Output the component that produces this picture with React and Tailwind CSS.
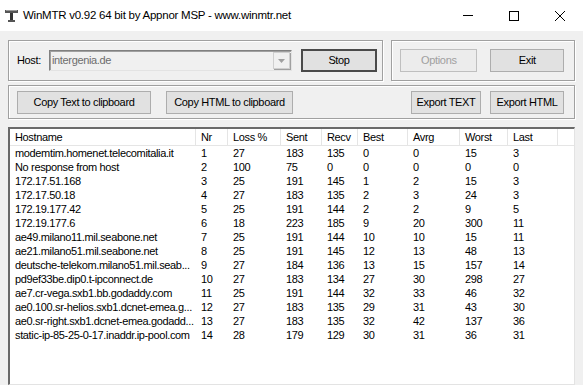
import React from 'react';

const rows = [
  ['modemtim.homenet.telecomitalia.it', 1, 27, 183, 135, 0, 0, 15, 3],
  ['No response from host', 2, 100, 75, 0, 0, 0, 0, 0],
  ['172.17.51.168', 3, 25, 191, 145, 1, 2, 15, 3],
  ['172.17.50.18', 4, 27, 183, 135, 2, 3, 24, 3],
  ['172.19.177.42', 5, 25, 191, 144, 2, 2, 9, 5],
  ['172.19.177.6', 6, 18, 223, 185, 9, 20, 300, 11],
  ['ae49.milano11.mil.seabone.net', 7, 25, 191, 144, 10, 10, 15, 11],
  ['ae21.milano51.mil.seabone.net', 8, 25, 191, 145, 12, 13, 48, 13],
  ['deutsche-telekom.milano51.mil.seab...', 9, 27, 184, 136, 13, 15, 157, 14],
  ['pd9ef33be.dip0.t-ipconnect.de', 10, 27, 183, 134, 27, 30, 298, 27],
  ['ae7.cr-vega.sxb1.bb.godaddy.com', 11, 25, 191, 144, 32, 33, 46, 32],
  ['ae0.100.sr-helios.sxb1.dcnet-emea.g...', 12, 27, 183, 135, 29, 31, 43, 30],
  ['ae0.sr-right.sxb1.dcnet-emea.godadd...', 13, 27, 183, 135, 32, 42, 137, 36],
  ['static-ip-85-25-0-17.inaddr.ip-pool.com', 14, 28, 179, 129, 30, 31, 36, 31],
];

const cols = [
  { label: 'Hostname', w: 'w-[186px]' },
  { label: 'Nr', w: 'w-[32px]' },
  { label: 'Loss %', w: 'w-[53px]' },
  { label: 'Sent', w: 'w-[41px]' },
  { label: 'Recv', w: 'w-[36px]' },
  { label: 'Best', w: 'w-[50px]' },
  { label: 'Avrg', w: 'w-[52px]' },
  { label: 'Worst', w: 'w-[48px]' },
  { label: 'Last', w: 'w-[50px]' },
];

function Btn({ children, className = '', disabled, primary }) {
  return (
    <div
      className={`flex items-center justify-center h-[23px] ${
        primary
          ? 'border-2 border-[#4a4a4a] bg-[#e1e1e1]'
          : disabled
          ? 'border border-[#bfbfbf] bg-[#ececec] text-[#a0a0a0]'
          : 'border border-[#adadad] bg-[#e1e1e1]'
      } ${className}`}
    >
      {children}
    </div>
  );
}

function Group({ children, className = '' }) {
  return (
    <div className={`border border-[#a0a0a0] shadow-[inset_1px_1px_0_#fff,1px_1px_0_#fff] flex items-center ${className}`}>
      {children}
    </div>
  );
}

export default function App() {
  return (
    <div className="w-[583px] h-[385px] bg-[#f0f0f0] overflow-hidden font-['Liberation_Sans',Arial,sans-serif] text-[11px] tracking-[-0.35px] text-black">
      {/* title bar */}
      <div className="h-[31px] bg-white flex items-center">
        <svg className="ml-[5px]" width="13" height="13" viewBox="0 0 13 13">
          <rect x="0" y="1" width="13" height="3" fill="#555" />
          <rect x="1" y="1" width="11" height="1" fill="#999" />
          <rect x="5" y="4" width="3" height="8" fill="#333" />
          <rect x="3" y="11" width="7" height="2" fill="#555" />
        </svg>
        <span className="ml-[5px] text-[11.5px] tracking-[-0.25px]">
          WinMTR v0.92 64 bit by Appnor MSP - www.winmtr.net
        </span>
        <div className="ml-auto flex items-center h-full">
          <div className="w-[46px] h-full flex items-center justify-center">
            <div className="w-[10px] h-px bg-black" />
          </div>
          <div className="w-[46px] h-full flex items-center justify-center">
            <div className="w-[10px] h-[10px] border border-black" />
          </div>
          <div className="w-[46px] h-full flex items-center justify-center">
            <svg width="10" height="10" viewBox="0 0 10 10">
              <path d="M0 0L10 10M10 0L0 10" stroke="#000" strokeWidth="1" />
            </svg>
          </div>
        </div>
      </div>

      <div className="px-[8px] pt-[9px]">
        {/* row 1 */}
        <div className="flex gap-[8px] h-[41px]">
          <Group className="w-[376px]">
            <span className="ml-[8px] w-[32px]">Host:</span>
            <div className="w-[243px] h-[21px] flex items-center bg-[#f0f0f0] border-t border-l border-[#808080] border-r border-b border-r-[#e3e3e3] border-b-[#e3e3e3] shadow-[inset_1px_1px_0_#a0a0a0]">
              <span className="ml-[2px] text-[#6d6d6d]">intergenia.de</span>
              <div className="ml-auto mr-[1px] w-[17px] h-[17px] bg-[#f0f0f0] border border-[#cfcfcf] shadow-[1px_1px_0_#a0a0a0] flex items-center justify-center">
                <svg width="7" height="4" viewBox="0 0 7 4">
                  <path d="M0 0H7L3.5 4Z" fill="#a0a0a0" />
                </svg>
              </div>
            </div>
            <Btn primary className="ml-[9px] w-[76px]">Stop</Btn>
          </Group>
          <Group className="w-[184px]">
            <Btn disabled className="ml-[8px] w-[77px]">Options</Btn>
            <Btn className="ml-[13px] w-[74px]">Exit</Btn>
          </Group>
        </div>

        {/* row 2 */}
        <Group className="mt-[4px] h-[34px]">
          <Btn className="ml-[8px] w-[134px]">Copy Text to clipboard</Btn>
          <Btn className="ml-[15px] w-[127px]">Copy HTML to clipboard</Btn>
          <Btn className="ml-auto w-[70px]">Export TEXT</Btn>
          <Btn className="ml-[9px] mr-[10px] w-[74px]">Export HTML</Btn>
        </Group>

        {/* list view */}
        <div className="mt-[8px] h-[258px] bg-white border-t-2 border-l-2 border-[#696969] border-r border-b border-r-[#e3e3e3] border-b-[#e3e3e3]">
          <div className="flex h-[17px] border-b border-[#e5e5e5]">
            {cols.map((c) => (
              <div key={c.label} className={`${c.w} shrink-0 flex items-center pl-[5px] border-r border-[#e5e5e5]`}>
                {c.label}
              </div>
            ))}
            <div className="flex-1" />
          </div>
          {rows.map((r) => (
            <div key={r[1]} className="flex h-[14px] items-center leading-[14px]">
              {r.map((v, i) => (
                <div key={i} className={`${cols[i].w} shrink-0 pl-[5px] whitespace-nowrap overflow-hidden`}>
                  {v}
                </div>
              ))}
            </div>
          ))}
        </div>
      </div>
    </div>
  );
}
